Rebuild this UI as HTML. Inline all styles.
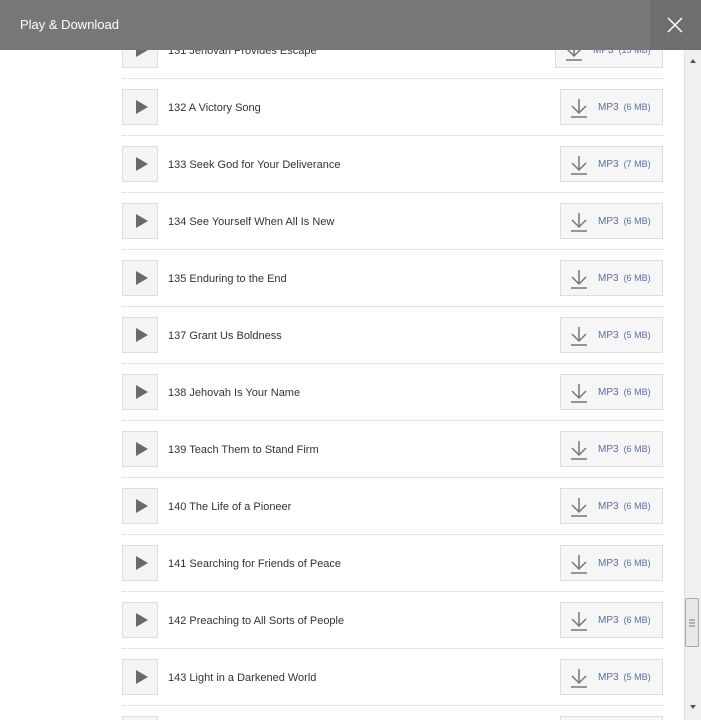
<!DOCTYPE html>
<html style="margin:0;width:701px;height:720px;overflow:hidden"><head><style>
body{margin:0;width:701px;height:720px;overflow:hidden;background:#fff;font-family:"Liberation Sans",Arial,sans-serif;position:relative}
.hdr{position:absolute;left:0;top:0;width:650px;height:50px;background:#777;color:#fff;font-size:13px;line-height:50px;padding-left:20px;box-sizing:border-box;z-index:5}
.cls{position:absolute;left:650px;top:0;width:51px;height:50px;background:#6e6e6e;z-index:5}
.row{position:absolute;left:122px;width:541px;height:57px}
.row:after{content:"";position:absolute;left:0;right:0;top:46px;border-top:1px dotted #ccc}
.play{position:absolute;left:0;top:0;width:34px;height:34px;border:1px solid #ddd;background:#f4f4f4}
.play:before{content:"";position:absolute;left:13px;top:10px;border-left:12px solid #6a6a6a;border-top:7px solid transparent;border-bottom:7px solid transparent}
.t{position:absolute;left:46px;top:1px;line-height:36px;font-size:11px;color:#333}
.dl{position:absolute;right:0;top:0;width:101px;height:34px;border:1px solid #ddd;background:#f6f6f6}
.dl svg{position:absolute;left:9px;top:8px}
.dl span{position:absolute;left:37px;top:0;line-height:34px;font-size:10px;color:#5a6fa0}
.dl span small{font-size:9px;margin-left:5px}
.sb{position:absolute;left:684px;top:50px;width:17px;height:670px;background:#f0f0f0;border-left:1px solid #e0e0e0;box-sizing:border-box}
.th{position:absolute;left:685px;top:598px;width:14px;height:49px;background:#e8e8e8;border:1px solid #aaa;border-radius:2px;box-sizing:border-box}
</style></head><body>
<div class="hdr">Play &amp; Download</div>
<div class="cls"><svg width="51" height="50"><path d="M18 18L32 32M32 18L18 32" stroke="#fff" stroke-width="1.5"/></svg></div>
<div class="sb"><svg width="17" height="670"><path d="M5 13l3-4 3 4z M5 655l3 4 3-4z" fill="#555"/></svg></div>
<div class="th"><svg width="12" height="47"><path d="M3 21h6M3 24h6M3 27h6" stroke="#777"/></svg></div>
<div id="r"></div>
<script>
var d=[["131 Jehovah Provides Escape","15"],["132 A Victory Song","6"],["133 Seek God for Your Deliverance","7"],["134 See Yourself When All Is New","6"],["135 Enduring to the End","6"],["137 Grant Us Boldness","5"],["138 Jehovah Is Your Name","6"],["139 Teach Them to Stand Firm","6"],["140 The Life of a Pioneer","6"],["141 Searching for Friends of Peace","6"],["142 Preaching to All Sorts of People","6"],["143 Light in a Darkened World","5"],["144 Keep Your Eyes on the Prize","6"]];
var h="";d.forEach(function(x,i){var y=32+57*i;var w=x[1].length>1?106:101;
h+='<div class="row" style="top:'+y+'px"><div class="play"></div><div class="t">'+x[0]+'</div><div class="dl" style="width:'+w+'px"><svg width="18" height="20"><path d="M9 1V15M2 8l7 7 7-7M1 19H17" stroke="#777" stroke-width="1.5" fill="none"/></svg><span>MP3<small>('+x[1]+' MB)</small></span></div></div>';});
document.getElementById("r").innerHTML=h;
</script>
</body></html>
